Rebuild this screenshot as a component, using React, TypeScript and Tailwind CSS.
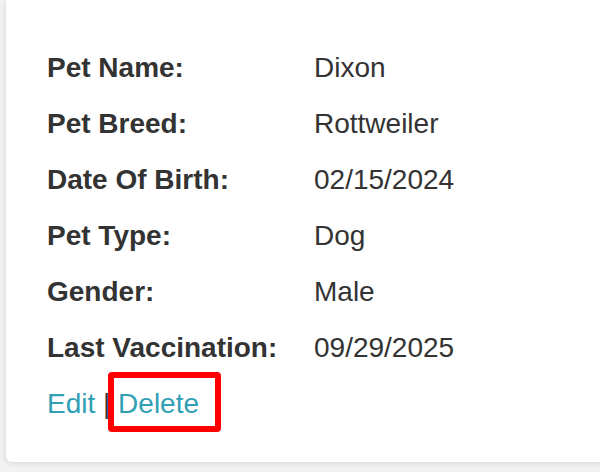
import React from 'react';

const pet = [
  { label: 'Pet Name:', value: 'Dixon' },
  { label: 'Pet Breed:', value: 'Rottweiler' },
  { label: 'Date Of Birth:', value: '02/15/2024' },
  { label: 'Pet Type:', value: 'Dog' },
  { label: 'Gender:', value: 'Male' },
  { label: 'Last Vaccination:', value: '09/29/2025' },
];

export default function App() {
  return (
    <div
      className="w-[600px] h-[472px] overflow-hidden bg-[#f2f2f2] pl-[6px] pb-[10px]"
      style={{ fontFamily: '"Liberation Sans", Arial, Helvetica, sans-serif' }}
    >
      <div className="h-full w-[640px] bg-white rounded-bl-[6px] shadow-[0_1px_6px_rgba(0,0,0,0.12)] pt-[40px] pl-[41px] text-[#333333] text-[28px]">
        {/* Pet details */}
        <div className="flex flex-col">
          {pet.map((row) => (
            <div key={row.label} className="flex h-[56px] items-center">
              <div className="w-[267px] font-bold">{row.label}</div>
              <div>{row.value}</div>
            </div>
          ))}
        </div>

        {/* Actions */}
        <div className="relative flex h-[56px] items-center whitespace-pre">
          <a className="text-[#31a0b5]">Edit</a>
          <span> | </span>
          <a className="text-[#31a0b5]">Delete</a>
          <span className="absolute left-[61px] top-[-4px] w-[113px] h-[60px] border-[6px] border-[#ff0000] rounded-[4px]" />
        </div>
      </div>
    </div>
  );
}
